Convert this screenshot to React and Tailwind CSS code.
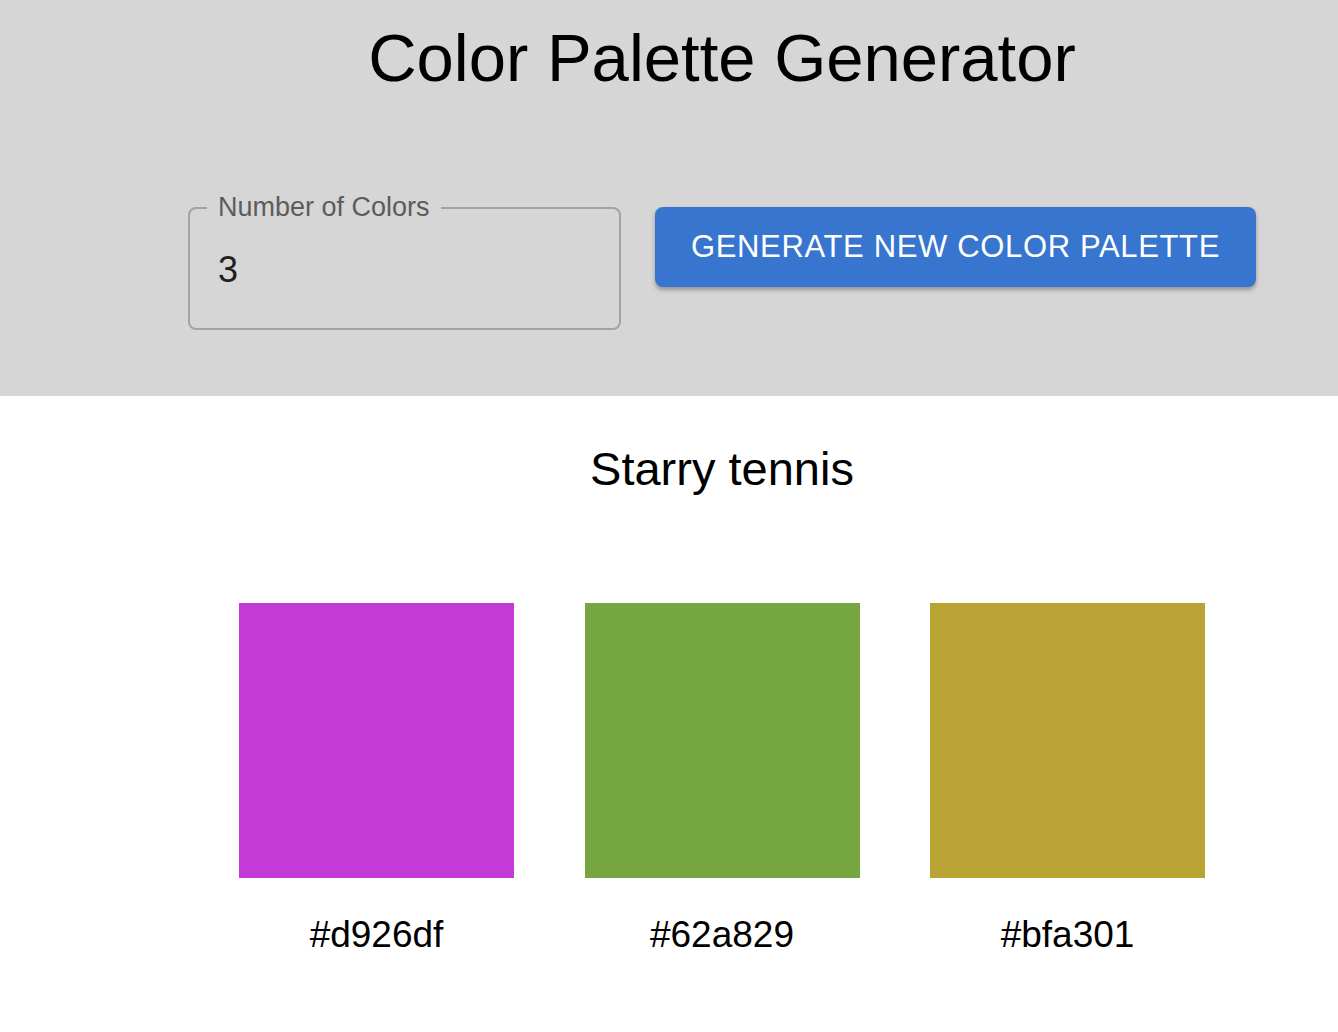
import { useState } from 'react';

const palette = {
  name: 'Starry tennis',
  colors: [
    { hex: '#d926df', swatch: '#c43ad6' },
    { hex: '#62a829', swatch: '#75a640' },
    { hex: '#bfa301', swatch: '#b9a334' },
  ],
};

export default function App() {
  const [count, setCount] = useState(3);

  return (
    <div className="min-h-screen bg-white font-['Liberation_Sans',Arial,sans-serif] text-black">
      {/* Header */}
      <header className="bg-[#d6d6d6] h-[396px] pl-[106px]">
        <h1 className="text-center text-[67px] leading-none pt-[24px]">Color Palette Generator</h1>
        <div className="flex justify-center items-start gap-[34px] mt-[103px]">
          <fieldset className="w-[433px] h-[136px] border-2 border-[#a3a3a3] rounded-lg pl-[17px] pr-4">
            <legend className="px-[11px] text-[27px] leading-none text-[#5c5c5c]">Number of Colors</legend>
            <input
              type="number"
              value={count}
              onChange={(e) => setCount(e.target.value)}
              className="w-full bg-transparent outline-none pl-[11px] mt-[28px] text-[36px] leading-none text-[#1f1f1f] appearance-none"
            />
          </fieldset>
          <button className="w-[601px] h-[80px] mt-[13px] rounded-lg bg-[#3875cf] text-white text-[31px] tracking-[0.65px] uppercase shadow-[0_3px_4px_rgba(0,0,0,0.3)]">
            Generate new color palette
          </button>
        </div>
      </header>

      {/* Palette */}
      <main className="pl-[106px]">
        <h2 className="text-center text-[47px] leading-none mt-[49px]">{palette.name}</h2>
        <div className="flex justify-center gap-[70.5px] mt-[111px]">
          {palette.colors.map((c) => (
            <div key={c.hex} className="flex flex-col items-center">
              <div className="w-[275px] h-[275px]" style={{ backgroundColor: c.swatch }} />
              <p className="text-[37px] leading-none mt-[38px]">{c.hex}</p>
            </div>
          ))}
        </div>
      </main>
    </div>
  );
}
